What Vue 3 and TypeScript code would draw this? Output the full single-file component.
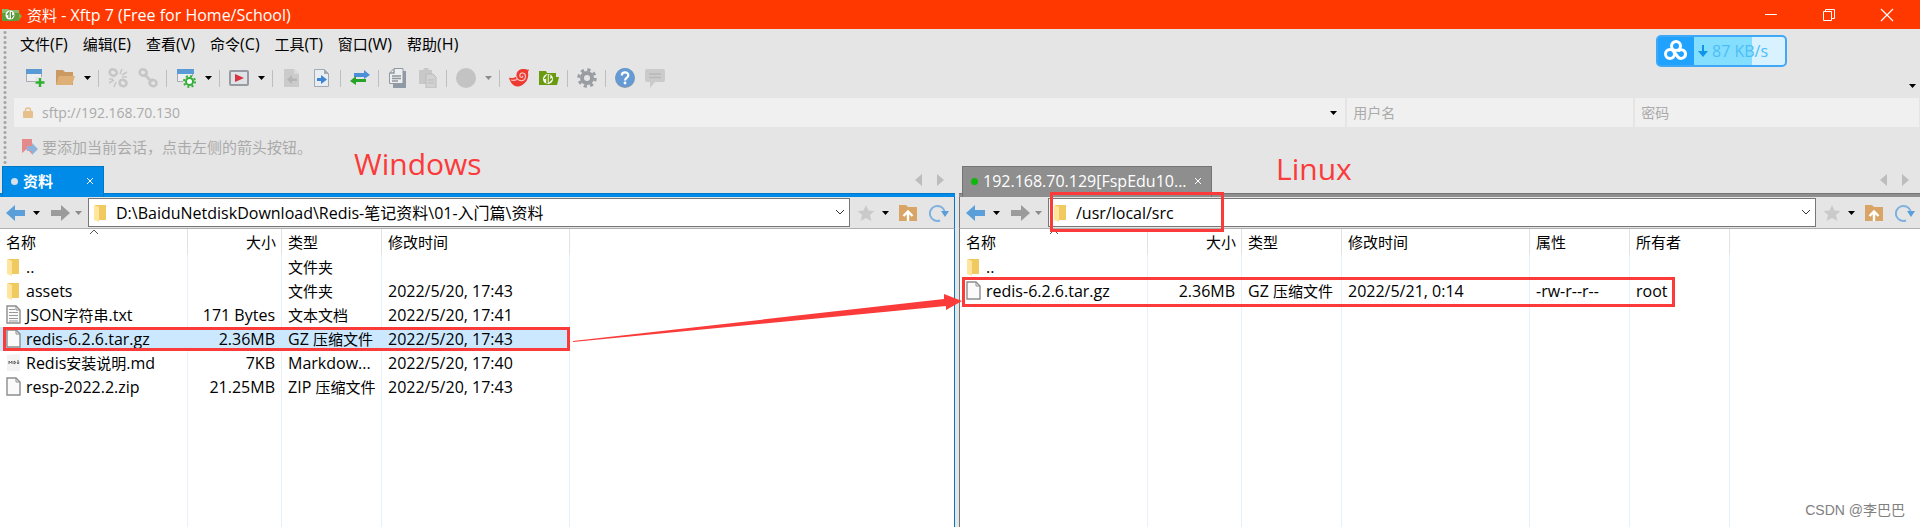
<script setup lang="ts">
import { h, ref, type FunctionalComponent } from 'vue'

interface FileRow {
  icon: 'folder' | 'text' | 'blank' | 'markdown'
  name: string
  size: string
  type: string
  date: string
  attr?: string
  owner?: string
  selected?: boolean
}

interface Pane {
  id: string
  tab: string
  connected: boolean
  path: string
  headers: string[]
  rows: FileRow[]
  caption: string
}

// Han runs are set one step smaller than the Latin text beside them.
const Mixed: FunctionalComponent<{ text: string }> = (props) =>
  props.text
    .split(/([\u3000-\u9fff\uff00-\uffef]+)/)
    .filter((part) => part)
    .map((part) => (/[\u3000-\u9fff\uff00-\uffef]/.test(part) ? h('span', { style: { fontSize: '15px' } }, part) : part))
Mixed.props = ['text']

const menus = ['文件(F)', '编辑(E)', '查看(V)', '命令(C)', '工具(T)', '窗口(W)', '帮助(H)']

const tools: string[] = [
  'new', 'open', 'drop', 'sep', 'unlink', 'link', 'sep', 'props', 'drop', 'sep', 'run', 'drop', 'sep',
  'docleft', 'docright', 'sep', 'swap', 'sep', 'copy', 'paste', 'sep', 'globe', 'dropoff', 'sep',
  'xshell', 'xftp', 'sep', 'gear', 'sep', 'help', 'chat',
]

const host = ref('sftp://192.168.70.130')
const user = ref('')
const password = ref('')

const panes = ref<Pane[]>([
  {
    id: 'local',
    tab: '资料',
    connected: false,
    path: 'D:\\BaiduNetdiskDownload\\Redis-笔记资料\\01-入门篇\\资料',
    headers: ['名称', '大小', '类型', '修改时间'],
    caption: 'Windows',
    rows: [
      { icon: 'folder', name: '..', size: '', type: '文件夹', date: '' },
      { icon: 'folder', name: 'assets', size: '', type: '文件夹', date: '2022/5/20, 17:43' },
      { icon: 'text', name: 'JSON字符串.txt', size: '171 Bytes', type: '文本文档', date: '2022/5/20, 17:41' },
      { icon: 'blank', name: 'redis-6.2.6.tar.gz', size: '2.36MB', type: 'GZ 压缩文件', date: '2022/5/20, 17:43', selected: true },
      { icon: 'markdown', name: 'Redis安装说明.md', size: '7KB', type: 'Markdow...', date: '2022/5/20, 17:40' },
      { icon: 'blank', name: 'resp-2022.2.zip', size: '21.25MB', type: 'ZIP 压缩文件', date: '2022/5/20, 17:43' },
    ],
  },
  {
    id: 'remote',
    tab: '192.168.70.129[FspEdu10...',
    connected: true,
    path: '/usr/local/src',
    headers: ['名称', '大小', '类型', '修改时间', '属性', '所有者'],
    caption: 'Linux',
    rows: [
      { icon: 'folder', name: '..', size: '', type: '', date: '', attr: '', owner: '' },
      { icon: 'blank', name: 'redis-6.2.6.tar.gz', size: '2.36MB', type: 'GZ 压缩文件', date: '2022/5/21, 0:14', attr: '-rw-r--r--', owner: 'root' },
    ],
  },
])
</script>

<template>
  <div class="app">
    <header class="titlebar">
      <svg class="app-icon" width="21" height="14" viewBox="0 0 21 14">
        <path d="M0 1h6l1 1h10v11H0z" fill="#5f9c3f" />
        <path d="M0 1h6l1 1h10v3H0z" fill="#8aba6a" />
        <path d="M17 5l3 3-3 4z" fill="#7fb03a" />
        <circle cx="8" cy="7" r="4.500" fill="#fff" />
        <path d="M7 10V4.500L5 7M9.500 4v5.500l2-2.500" stroke="#4d8a30" stroke-width="1.200" fill="none" />
      </svg>
      <h1><Mixed text="资料 - Xftp 7 (Free for Home/School)" /></h1>
      <div class="window-buttons">
        <button aria-label="最小化"><svg width="14" height="14"><path d="M1 6.500h12" stroke="#fff" /></svg></button>
        <button aria-label="还原"><svg width="14" height="14" fill="none" stroke="#fff"><path d="M1.500 3.500h8v9h-8zM3.500 3.500v-2h9v9h-3" /></svg></button>
        <button aria-label="关闭"><svg width="14" height="14"><path d="M1 1l12 12M13 1L1 13" stroke="#fff" stroke-width="1.200" /></svg></button>
      </div>
    </header>

    <section class="bars">
      <nav class="menubar">
        <button v-for="m in menus" :key="m"><Mixed :text="m" /></button>
      </nav>

      <div class="toolbar">
        <template v-for="(t, i) in tools" :key="i">
          <span v-if="t === 'sep'" class="sep"></span>
          <button v-else-if="t === 'drop' || t === 'dropoff'" class="drop" :class="{ off: t === 'dropoff' }" aria-label="更多">
            <svg width="7" height="4"><path d="M0 0h7L3.500 4z" fill="currentColor" /></svg>
          </button>
          <button v-else class="tool" :aria-label="t">
            <svg width="20" height="20" viewBox="0 0 20 20">
              <template v-if="t === 'new'">
                <path d="M1.500 1.500h15v12h-15z" fill="#eceef0" stroke="#a5abb3" />
                <path d="M1 1h16v5H1z" fill="#5b9bd5" />
                <path d="M10 9h10v10H10z" fill="#e5e5e5" />
                <path d="M15 10v9M10.500 14.500h9" stroke="#2eb030" stroke-width="2.400" />
              </template>
              <template v-else-if="t === 'open'">
                <path d="M1 2h7l2 2h8v13H1z" fill="#cb9a62" />
                <path d="M4 8h16l-3 9H1z" fill="#deb078" />
              </template>
              <template v-else-if="t === 'unlink' || t === 'link'">
                <g fill="none" stroke="#c6c6c6" stroke-width="2.600">
                  <rect x="1.500" y="1.500" width="7" height="6" rx="3" transform="rotate(25 5 5)" />
                  <rect x="11.500" y="12" width="7" height="6" rx="3" transform="rotate(25 15 15)" />
                  <path v-if="t === 'link'" d="M6 6l8 8" />
                </g>
                <path v-if="t === 'unlink'" d="M12 6l2-5M14 7l5-3M14 9h5M6 12l-5 3M8 14l-2 5M5 11H1" stroke="#c6c6c6" stroke-width="1.500" />
              </template>
              <template v-else-if="t === 'props'">
                <path d="M1.500 1.500h15v12h-15z" fill="#eceef0" stroke="#a5abb3" />
                <path d="M1 1h17v5H1z" fill="#5b9bd5" />
                <circle cx="13.500" cy="13.500" r="6.500" fill="#e5e5e5" />
                <circle cx="13.500" cy="13.500" r="3.500" fill="#fff" stroke="#35ae37" stroke-width="2" />
                <circle cx="13.500" cy="13.500" r="5.500" fill="none" stroke="#35ae37" stroke-width="2" stroke-dasharray="2 2.320" />
              </template>
              <template v-else-if="t === 'run'">
                <rect x="1" y="3" width="18" height="14" rx="1" fill="#dfe2e6" stroke="#979ba1" stroke-width="2" />
                <path d="M6 6l9 4-9 4z" fill="#d9333f" />
              </template>
              <template v-else-if="t === 'docleft'">
                <path d="M2 1h10l5 5v13H2z" fill="#cbcbcb" />
                <path d="M12 1v5h5" fill="#dadada" />
                <path d="M15 10.500h-5V7l-5 4.500 5 4.500v-3h5z" fill="#b5b5b5" />
              </template>
              <template v-else-if="t === 'docright'">
                <path d="M2.500 1.500h10l4 4v13h-14z" fill="#e8edf2" stroke="#a3a9b0" />
                <path d="M12 1v5h5" fill="#a3a9b0" />
                <path d="M5 10h4V7l6 4.500L9 16v-3H5z" fill="#3f85d6" />
              </template>
              <template v-else-if="t === 'swap'">
                <path d="M4 5h10V2l6 5-6 4V9H4z" fill="#4b8fd8" />
                <path d="M16 11H6V8l-6 5 6 4v-3h10z" fill="#27a327" />
              </template>
              <template v-else-if="t === 'copy'">
                <path d="M6 3h12v17H5v-3z" fill="#8f9aa5" />
                <path d="M6 .5h9v15H1.500V5z" fill="#eceef0" stroke="#9299a1" />
                <path d="M6 1v4H2M4 8h9M4 10.500h9M4 13h6" stroke="#8f969d" stroke-width="1.400" fill="none" />
              </template>
              <template v-else-if="t === 'paste'">
                <path d="M1 2h4l1-2h4l1 2h3v14H1z" fill="#c8c8c8" />
                <path d="M8 6h7l3 3v11H8z" fill="#d2d2d2" stroke="#bcbcbc" />
                <path d="M10 12h6M10 15h6" stroke="#b9b9b9" />
              </template>
              <circle v-else-if="t === 'globe'" cx="10" cy="10" r="10" fill="#c3c3c3" />
              <template v-else-if="t === 'xshell'">
                <path d="M0 9.500c3 1 5 .5 7.500-1C7 4 10 1 14 1c3 0 4 1 6 .5-.5 1.500-1 2-1 3 1.500 7-4 14-10.500 14C4 18.500 1 14 0 9.500z" fill="#ee3a30" />
                <path d="M7.500 8.500c.5 5 8.500 6 9 0 .2-4-5.500-5-5.700-1 0 2.500 3.200 2.500 3 .3M2 12c2 .5 4 .5 6-.5" stroke="#f3c5c0" stroke-width="1.200" fill="none" />
              </template>
              <template v-else-if="t === 'xftp'">
                <path d="M0 3h7l1 2h9v4h3l-2 8H0z" fill="#6a9a10" />
                <circle cx="9" cy="11" r="5" fill="#fff" />
                <path d="M8 15.500V8L5.500 11M10.500 6.500V13l2.500-2.500" stroke="#6a9a10" stroke-width="1.600" fill="none" />
              </template>
              <template v-else-if="t === 'gear'">
                <circle cx="10" cy="10" r="8.200" fill="none" stroke="#999da2" stroke-width="3" stroke-dasharray="3.220" />
                <circle cx="10" cy="10" r="5" fill="none" stroke="#999da2" stroke-width="4" />
              </template>
              <template v-else-if="t === 'help'">
                <circle cx="10" cy="10" r="10" fill="#8496aa" />
                <circle cx="10" cy="9.500" r="9.500" fill="#659bd5" />
                <path d="M6.800 7.500c0-4 6.500-4 6.500-.3 0 2.500-3.200 2.200-3.200 5.300" fill="none" stroke="#fff" stroke-width="2.200" />
                <circle cx="10" cy="15" r="1.400" fill="#fff" />
              </template>
              <template v-else>
                <path d="M2 1h16q2 0 2 2v9q0 2-2 2h-8l-5 6v-6H2q-2 0-2-2V3q0-2 2-2z" fill="#cbcbcb" />
                <path d="M4 6h12M4 9.500h12" stroke="#b8b8b8" stroke-width="1.400" />
              </template>
            </svg>
          </button>
        </template>
        <button class="drop more" aria-label="工具栏选项">
          <svg width="7" height="4"><path d="M0 0h7L3.500 4z" fill="currentColor" /></svg>
        </button>
      </div>

      <form class="address" @submit.prevent>
        <div class="field host">
          <svg width="10" height="12" viewBox="0 0 10 12">
            <path d="M2.500 6V3q0-2 2.500-2t2.500 2v3" fill="none" stroke="#e5c08a" stroke-width="1.500" />
            <rect y="4" width="10" height="7" rx="1" fill="#e5c08a" />
          </svg>
          <input v-model="host" aria-label="主机" />
          <button class="drop" aria-label="历史记录"><svg width="7" height="4"><path d="M0 0h7L3.500 4z" fill="currentColor" /></svg></button>
        </div>
        <div class="field login"><input v-model="user" placeholder="用户名" aria-label="用户名" /></div>
        <div class="field login"><input v-model="password" type="password" placeholder="密码" aria-label="密码" /></div>
      </form>

      <div class="hint">
        <svg width="17" height="17" viewBox="0 0 17 17">
          <path d="M1 1h10v15l-5-5-5 4z" fill="#e58a8a" />
          <path d="M6 8h5V5l6 6-6 6v-4H6z" fill="#8fb2dc" />
        </svg>
        <p>要添加当前会话，点击左侧的箭头按钮。</p>
      </div>

      <div class="speed">
        <svg class="cloud" width="26" height="26" viewBox="0 0 26 26" fill="none" stroke="#fff" stroke-width="3">
          <circle cx="13" cy="8" r="4.500" />
          <circle cx="7" cy="16" r="4.500" />
          <path d="M15 13.500c2-3 7-2 7.500 2s-5 7-8 3l-4-5.500" />
        </svg>
        <svg class="down" width="10" height="14" viewBox="0 0 10 14"><path d="M4 1h2v6h4l-5 6-5-6h4z" fill="#0f94e8" /></svg>
        <span>87 KB/s</span>
      </div>
    </section>

    <main class="workspace">
      <section v-for="p in panes" :key="p.id" class="pane" :class="p.id">
        <div class="tabs">
          <div class="tab">
            <span class="dot"></span>
            <span class="tab-name"><Mixed :text="p.tab" /></span>
            <button aria-label="关闭标签"><svg width="8" height="8"><path d="M1 1l6 6M7 1L1 7" stroke="#fff" /></svg></button>
          </div>
          <div class="tab-scroll">
            <button aria-label="向左"><svg width="7" height="12"><path d="M7 0v12L0 6z" fill="#bdbdbd" /></svg></button>
            <button aria-label="向右"><svg width="7" height="12"><path d="M0 0v12l7-6z" fill="#bdbdbd" /></svg></button>
          </div>
        </div>
        <div class="nav">
          <button class="go" aria-label="后退"><svg width="20" height="16"><path d="M0 8l9-8v5h10v6H9v5z" fill="#5b9fda" /></svg></button>
          <button class="drop" aria-label="后退历史"><svg width="7" height="4"><path d="M0 0h7L3.500 4z" fill="currentColor" /></svg></button>
          <button class="go" aria-label="前进"><svg width="20" height="16"><path d="M20 8l-9-8v5H1v6h10v5z" fill="#9b9b9b" /></svg></button>
          <button class="drop off" aria-label="前进历史"><svg width="7" height="4"><path d="M0 0h7L3.500 4z" fill="currentColor" /></svg></button>
          <div class="path">
            <svg width="12" height="18" viewBox="0 0 12 18"><path d="M1 1h11v15H3z" fill="#f0c95f" /><path d="M0 1l5 2v15l-5-2z" fill="#ffe69c" /></svg>
            <input v-model="p.path" aria-label="路径" />
            <button aria-label="路径历史"><svg width="10" height="7"><path d="M1 1l4 4 4-4" fill="none" stroke="#333" /></svg></button>
          </div>
          <button class="act" aria-label="收藏"><svg width="18" height="16" viewBox="0 0 18 16"><path d="M9 0l2.500 5.500 6 .5-4.500 4 1.500 6L9 13l-5.500 3L5 10 .5 6l6-.5z" fill="#cacaca" /></svg></button>
          <button class="drop" aria-label="收藏夹"><svg width="7" height="4"><path d="M0 0h7L3.500 4z" fill="currentColor" /></svg></button>
          <button class="act" aria-label="上级目录"><svg width="18" height="16" viewBox="0 0 18 16"><path d="M0 0h7l2 2h9v14H0z" fill="#d9a566" /><path d="M9 16V7M4.500 11L9 6.500l4.500 4.500" fill="none" stroke="#fff" stroke-width="2.400" /></svg></button>
          <button class="act last" aria-label="刷新"><svg width="20" height="18" viewBox="0 0 20 18"><path d="M11 16.500A7.500 7.500 0 1 1 15.500 7" fill="none" stroke="#7fb1e0" stroke-width="2" /><path d="M12 7h8l-4 6z" fill="#5b9fda" /></svg></button>
        </div>
        <div class="list">
          <table>
            <colgroup><col v-for="(c, i) in p.headers" :key="c" :class="'c' + i" /><col /></colgroup>
            <thead>
              <tr>
                <th v-for="(c, i) in p.headers" :key="c" scope="col" :aria-sort="i === 0 ? 'ascending' : undefined">
                  {{ c }}<svg v-if="i === 0" class="sort" width="10" height="6"><path d="M1 5l4-4 4 4" fill="none" stroke="#555" /></svg>
                </th>
                <td></td>
              </tr>
            </thead>
            <tbody>
              <tr v-for="r in p.rows" :key="r.name" :class="{ selected: r.selected }">
                <td>
                  <span class="name">
                    <svg width="16" height="20" viewBox="0 0 16 20">
                      <template v-if="r.icon === 'folder'">
                        <path d="M2 2h11v15H4z" fill="#f0c95f" /><path d="M1 2l5 2v15l-5-2z" fill="#ffe69c" />
                      </template>
                      <template v-else-if="r.icon === 'markdown'">
                        <path d="M1 2l13-1v17H1z" fill="#f3f3f3" />
                        <path d="M3 11V8l1.500 2L6 8v3M8 8v3l2-1.500L8 8M12 7v4M11 9.500l1 1.500 1-2" fill="none" stroke="#666" />
                      </template>
                      <template v-else>
                        <path d="M1 1h9l4 4v13H1z" fill="#fafafa" stroke="#8d8d8d" stroke-width="1.400" />
                        <path d="M10 1v4h4" fill="none" stroke="#8d8d8d" />
                        <path v-if="r.icon === 'text'" d="M3 4.500h6M3 7.500h9M3 10.500h9M3 13.500h9M3 16h9" stroke="#999" />
                      </template>
                    </svg>
                    <Mixed :text="r.name" />
                  </span>
                </td>
                <td>{{ r.size }}</td>
                <td><Mixed :text="r.type" /></td>
                <td>{{ r.date }}</td>
                <td v-if="r.attr !== undefined">{{ r.attr }}</td>
                <td v-if="r.owner !== undefined">{{ r.owner }}</td>
                <td class="rest"></td>
              </tr>
            </tbody>
          </table>
        </div>
        <strong class="caption">{{ p.caption }}</strong>
        <span class="mark file-mark"></span>
        <span v-if="p.id === 'remote'" class="mark path-mark"></span>
        <svg v-if="p.id === 'local'" class="arrow" width="390" height="54" viewBox="0 0 390 54">
          <path d="M0 50L371 8V3l18 7-16 9v-4L0 51z" fill="#fb3a3a" />
        </svg>
      </section>
      <span class="watermark">CSDN @李巴巴</span>
    </main>
  </div>
</template>

<style>
body {
  margin: 0;
}
</style>

<style scoped>
.app {
  display: flex;
  flex-direction: column;
  min-height: 100vh;
  background: #e5e5e5;
  color: #000;
  font: 16px/24px "Open Sans", "Noto Sans CJK SC", sans-serif;
  overflow: hidden;
}
.app * {
  box-sizing: border-box;
}
button,
input {
  margin: 0;
  padding: 0;
  border: 0;
  background: none;
  color: inherit;
  font: inherit;
}
button {
  display: flex;
  align-items: center;
  justify-content: center;
  flex: none;
}
input {
  flex: 1;
  min-width: 0;
  outline: 0;
}
svg {
  display: block;
  flex: none;
}
.titlebar {
  display: flex;
  align-items: center;
  height: 29px;
  padding-left: 2px;
  background: #ff3800;
  color: #fff;
}
h1 {
  flex: 1;
  margin: 0 0 0 4px;
  font-size: 16px;
  font-weight: 400;
}
.window-buttons {
  display: flex;
  padding-right: 4px;
}
.window-buttons button {
  width: 58px;
  height: 28px;
}
.bars {
  position: relative;
  padding-left: 14px;
  background: radial-gradient(circle, #a6a6a6 1px, transparent 2px) 3px 1px / 4px 5px repeat-y;
}
.menubar {
  display: flex;
  gap: 15px;
  height: 34px;
  padding: 3px 6px 7px;
}
.menubar button {
  white-space: pre;
}
.toolbar {
  display: flex;
  align-items: center;
  height: 30px;
  margin-bottom: 5px;
  padding-left: 6px;
}
.tool {
  width: 30px;
  height: 30px;
}
.drop {
  width: 15px;
  height: 24px;
  padding-right: 1px;
}
.off {
  color: #8c8c8c;
}
.sep {
  flex: none;
  width: 8px;
  height: 17px;
  background: linear-gradient(#bebebe, #bebebe) 3px 0 / 1px 100% no-repeat;
}
.more {
  align-self: flex-end;
  height: 15px;
  margin-left: auto;
}
.address {
  display: grid;
  grid-template-columns: 1332fr 286fr 284fr;
  gap: 2px;
  padding-right: 1px;
  color: #aaa;
}
.field {
  display: flex;
  align-items: center;
  min-width: 0;
  height: 29px;
  background: #f0f0f0;
  font-size: 14px;
}
.field.host {
  padding: 0 4px 0 9px;
}
.host input {
  margin-left: 9px;
}
.host .drop {
  color: #000;
}
.login {
  padding-left: 6px;
}
.login input::placeholder {
  color: #aaa;
  opacity: 1;
}
.hint {
  display: flex;
  align-items: center;
  gap: 4px;
  height: 39px;
  padding: 0 0 0 7px;
  color: #aaa;
  font-size: 15px;
}
.hint p {
  margin: 0;
}
.speed {
  position: absolute;
  top: 6px;
  right: 133px;
  display: flex;
  align-items: center;
  width: 131px;
  height: 32px;
  border: 2px solid #3fa9f8;
  border-radius: 5px;
  background: linear-gradient(90deg, #22a2ff 36px, #84dfff 36px 94px, #d8f3ff 94px);
  color: #4cbdf8;
}
.cloud {
  margin: 0 9px 0 5px;
}
.down {
  margin-right: 4px;
}
.workspace {
  position: relative;
  display: grid;
  grid-template-columns: 955fr 961fr;
  column-gap: 4px;
  flex: 1;
}
.pane {
  position: relative;
  display: flex;
  flex-direction: column;
  min-width: 0;
  --accent: #008be8;
  --edge: #0078c8;
}
.pane.remote {
  --accent: #8e8e8e;
  --edge: #757575;
}
.tabs {
  display: flex;
  justify-content: space-between;
  height: 31px;
  padding-left: 2px;
  background: linear-gradient(var(--edge), var(--edge)) 0 27px / 100% 1px no-repeat,
    linear-gradient(var(--accent), var(--accent)) 0 28px / 100% 3px no-repeat;
}
.remote .tabs {
  padding-left: 3px;
}
.tab {
  display: flex;
  align-items: center;
  width: 102px;
  padding: 0 9px 2px 8px;
  border: 1px solid var(--edge);
  border-bottom: 0;
  background: var(--accent);
  color: #fff;
}
.remote .tab {
  width: 250px;
}
.dot {
  width: 7px;
  height: 7px;
  margin-right: 5px;
  border-radius: 50%;
  background: #d5e0e8;
}
.remote .dot {
  background: #0bb80b;
}
.tab-name {
  flex: 1;
  overflow: hidden;
  white-space: nowrap;
}
.local .tab-name {
  font-weight: 700;
}
.tab-scroll {
  display: flex;
  gap: 15px;
  height: 27px;
  padding-right: 11px;
}
.nav {
  display: flex;
  align-items: center;
  height: 32px;
  padding: 1px 5px 1px 6px;
  border-bottom: 1px solid #b0b0b0;
}
.local .nav,
.local .list {
  border-right: 1px solid var(--edge);
}
.remote .nav,
.remote .list {
  border-left: 1px solid var(--edge);
}
.go {
  width: 20px;
}
.nav .drop {
  width: 24px;
  padding-right: 3px;
}
.nav .drop.off {
  width: 18px;
  padding-right: 1px;
}
.path {
  display: flex;
  align-items: center;
  flex: 1;
  height: 29px;
  padding: 0 4px 0 5px;
  border: 1px solid #777;
  background: #fff;
}
.path input {
  margin-left: 10px;
}
.act {
  width: 18px;
}
.act:nth-of-type(5) {
  margin-left: 7px;
}
.last {
  width: 20px;
  margin-left: 12px;
}
.list {
  flex: 1;
  background-color: #fff;
  background-image: linear-gradient(#e8f1fa, #e8f1fa), linear-gradient(#e8f1fa, #e8f1fa), linear-gradient(#e8f1fa, #e8f1fa),
    linear-gradient(#e8f1fa, #e8f1fa), linear-gradient(#e8f1fa, #e8f1fa), linear-gradient(#e8f1fa, #e8f1fa);
  background-position: 187px 0, 281px 0, 381px 0, 569px 0, 669px 0, 769px 0;
  background-size: 1px 100%, 1px 100%, 1px 100%, 1px 100%, 1px 100%, 1px 100%;
  background-repeat: no-repeat;
}
.local .list {
  background-size: 1px 100%, 1px 100%, 1px 100%, 1px 100%, 0 0, 0 0;
}
table {
  width: 100%;
  table-layout: fixed;
  border-collapse: separate;
  border-spacing: 0;
}
.c0,
.c3 {
  width: 188px;
}
.c1 {
  width: 94px;
}
.c2,
.c4,
.c5 {
  width: 100px;
}
th,
td {
  height: 24px;
  padding: 0 0 0 6px;
  line-height: 24px;
  text-align: left;
  white-space: nowrap;
}
th {
  position: relative;
  height: 26px;
  border-right: 1px solid #e2e2e2;
  font-size: 15px;
  font-weight: 400;
}
th:nth-child(2),
tbody td:nth-child(2) {
  padding: 0 7px 0 0;
  text-align: right;
}
th:nth-child(2) {
  padding-right: 5px;
}
.sort {
  position: absolute;
  top: 0;
  left: 89px;
}
.selected td:not(.rest) {
  background: #cce8ff;
}
.name {
  display: flex;
  align-items: center;
  height: 24px;
}
.name svg {
  margin-right: 4px;
}
.caption {
  position: absolute;
  top: -22px;
  left: 354px;
  color: #fb3a3a;
  font-size: 30px;
  font-weight: 400;
  line-height: 40px;
}
.remote .caption {
  top: -17px;
  left: 317px;
}
.mark {
  position: absolute;
  border: 3px solid #fb3a3a;
  pointer-events: none;
}
.file-mark {
  top: 161px;
  left: 3px;
  width: 567px;
  height: 24px;
}
.remote .file-mark {
  top: 111px;
  width: 713px;
  height: 30px;
}
.path-mark {
  top: 26px;
  left: 91px;
  width: 174px;
  height: 40px;
}
.arrow {
  position: absolute;
  z-index: 1;
  top: 125px;
  left: 573px;
}
.watermark {
  position: absolute;
  right: 15px;
  bottom: 5px;
  color: #808080;
  font: 14px/24px "Liberation Sans", "Noto Sans CJK SC", sans-serif;
}
</style>
